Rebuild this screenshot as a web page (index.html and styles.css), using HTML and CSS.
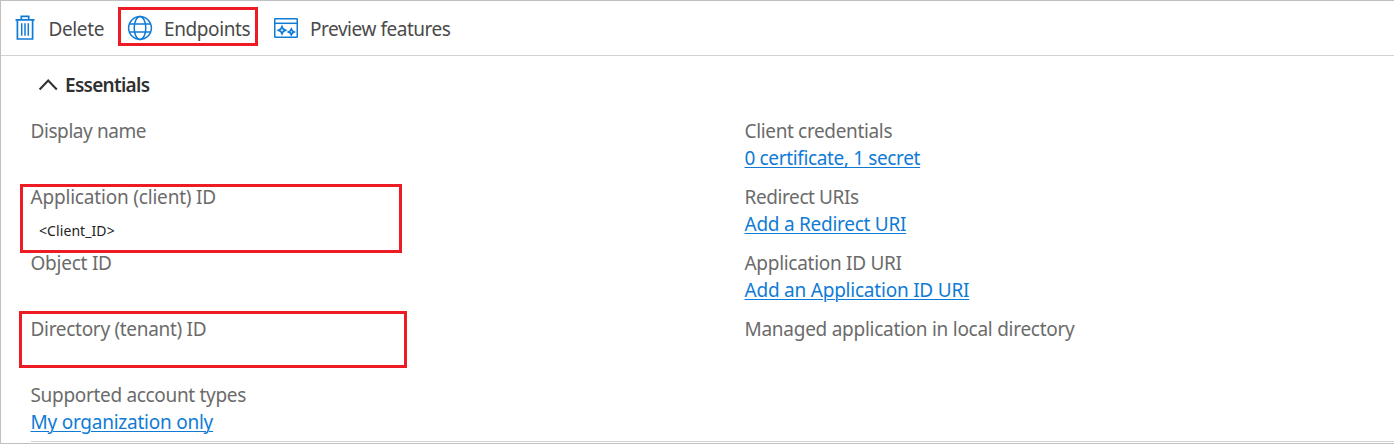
FILE: index.html
```html
<!DOCTYPE html>
<html lang="en">
<head>
<meta charset="utf-8">
<title>App registration</title>
<link rel="stylesheet" href="styles.css">
</head>
<body>
<main class="page">
  <nav class="toolbar">
    <button class="command delete">
      <svg class="icon trash" width="20" height="26" viewBox="0 0 20 26" fill="none" stroke="#0f7bd6" stroke-width="1.7"><path d="M.5 4.8h19M6.3 4.5V1.3h7.4v3.2M2.4 5v19h15.2V5"/><path d="M6.7 8.3v12.4M10 8.3v12.4M13.3 8.3v12.4" stroke-width="1.5"/></svg>
      <span class="label t-delete">Delete</span>
    </button>
    <button class="command endpoints">
      <svg class="icon" width="26" height="26" viewBox="0 0 26 26" fill="none" stroke="#0f7bd6" stroke-width="1.5"><circle cx="13" cy="13" r="11.4"/><ellipse cx="13" cy="13" rx="5.8" ry="11.4"/><path d="M3 9h20M3 17h20"/></svg>
      <span class="label t-endpoints">Endpoints</span>
    </button>
    <button class="command preview">
      <svg class="icon" width="24" height="20" viewBox="0 0 24 20" fill="none" stroke="#0f7bd6" stroke-width="1.5"><rect x=".75" y=".75" width="22.5" height="18.5" rx=".6"/><path d="M1 5.3h22"/><path d="M8 8.5L9.2 11 11.6 12.2 9.2 13.4 8 15.9 6.8 13.4 4.4 12.2 6.8 11zM17.3 11l1 1.9 1.9 1-1.9 1-1 1.9-1-1.9-1.9-1 1.9-1z" stroke-width="1.7"/></svg>
      <span class="label t-preview">Preview features</span>
    </button>
  </nav>
  <section class="essentials">
    <h2 class="heading">
      <svg class="chevron" width="20" height="14" viewBox="0 0 20 14" fill="none" stroke="#323130" stroke-width="2.1"><path d="M1.6 10.4L10.2 1.6l8.6 8.8"/></svg>
      <span class="t-essentials">Essentials</span>
    </h2>
    <div class="columns">
      <dl class="column">
        <div class="field"><dt class="t-display">Display name</dt></div>
        <div class="field"><dt class="t-client">Application (client) ID</dt><dd class="client-id">&lt;Client_ID&gt;</dd></div>
        <div class="field"><dt class="t-object">Object ID</dt></div>
        <div class="field"><dt class="t-tenant">Directory (tenant) ID</dt></div>
        <div class="field"><dt class="t-types">Supported account types</dt><dd><a class="link t-org" href="#">My organization only</a></dd></div>
      </dl>
      <dl class="column">
        <div class="field"><dt class="t-cred">Client credentials</dt><dd><a class="link t-secret" href="#">0 certificate, 1 secret</a></dd></div>
        <div class="field"><dt class="t-redirect">Redirect URIs</dt><dd><a class="link t-addredirect" href="#">Add a Redirect URI</a></dd></div>
        <div class="field"><dt class="t-appuri">Application ID URI</dt><dd><a class="link t-addapp" href="#">Add an Application ID URI</a></dd></div>
        <div class="field"><dt class="t-managed">Managed application in local directory</dt></div>
      </dl>
    </div>
  </section>
  <div class="mark mark-endpoints"></div>
  <div class="mark mark-client"></div>
  <div class="mark mark-tenant"></div>
</main>
</body>
</html>
```
FILE: styles.css
```css
* { box-sizing: border-box; }
body { margin: 0; background: #fff; }
.page {
  position: relative;
  height: 444px;
  overflow: hidden;
  border: 1px solid #c0c0c0;
  border-right: 0;
  font-family: "Noto Sans", "Open Sans", sans-serif;
  font-size: 19px;
  line-height: 27px;
  color: #6b6b6b;
  white-space: nowrap;
}
.toolbar {
  display: flex;
  align-items: center;
  height: 55px;
  padding-left: 14px;
  border-bottom: 1px solid #d2d2d2;
}
.command {
  display: flex;
  align-items: center;
  padding: 0;
  border: 0;
  background: none;
  font: inherit;
  color: #4a4a4a;
}
.icon { flex: none; display: block; }
.label { padding-top: 2px; }
.delete { width: 112px; gap: 13.5px; }
.endpoints { width: 147px; gap: 11px; }
.preview { gap: 12px; }
.heading {
  display: flex;
  align-items: center;
  gap: 7px;
  margin: 0;
  padding: 16px 0 0 37px;
  font-size: 19px;
  font-weight: 600;
  color: #303030;
}
.columns {
  display: grid;
  grid-template-columns: 714px 1fr;
  height: 324px;
  margin: 19px 0 0 30px;
  border-bottom: 1px solid #d2d2d2;
}
.column { margin: 0 0 0 -0.5px; }
.field { height: 66px; }
dd { margin: 0; }
.link { color: #0f7bd6; text-decoration: underline; text-decoration-thickness: 1px; text-underline-offset: 2px; }
.client-id { padding: 6px 0 0 8.5px; font-size: 14px; line-height: 27px; letter-spacing: 0.08px; color: #222; }

/* Tracking per label */
.t-delete { letter-spacing: -0.38px; }
.t-endpoints { letter-spacing: -0.4px; }
.t-preview { letter-spacing: -0.46px; }
.t-essentials { letter-spacing: -0.72px; }
.t-display { letter-spacing: -0.42px; }
.t-client { letter-spacing: -0.19px; }
.t-object { letter-spacing: -0.24px; }
.t-tenant { letter-spacing: -0.3px; }
.t-types { letter-spacing: -0.32px; }
.t-org { letter-spacing: -0.24px; }
.t-cred { letter-spacing: -0.35px; }
.t-secret { letter-spacing: -0.36px; }
.t-redirect { letter-spacing: -0.4px; }
.t-addredirect { letter-spacing: -0.26px; }
.t-appuri { letter-spacing: -0.29px; }
.t-addapp { letter-spacing: -0.22px; }
.t-managed { letter-spacing: -0.27px; }

/* Red highlight boxes */
.mark { position: absolute; border: 3px solid #ed1c24; }
.mark-endpoints { left: 117px; top: 6px; width: 140px; height: 39px; }
.mark-client { left: 19px; top: 183px; width: 382px; height: 69px; }
.mark-tenant { left: 18px; top: 310px; width: 388px; height: 57px; }
```
